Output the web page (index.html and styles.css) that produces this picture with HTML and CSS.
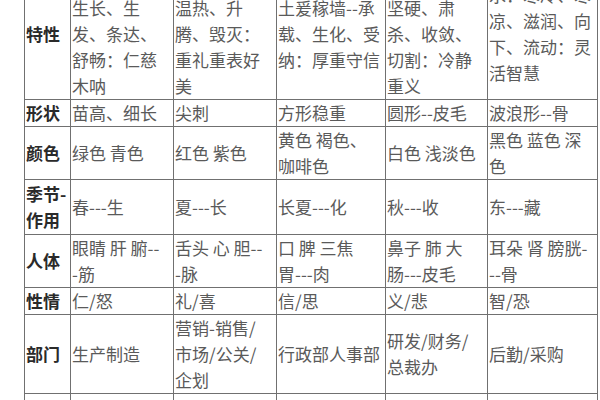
FILE: index.html
```html
<!DOCTYPE html>
<html lang="zh-CN">
<head>
<meta charset="utf-8">
<title>五行</title>
<link rel="stylesheet" href="styles.css">
</head>
<body>
<div class="sheet">
<table class="wx">
<colgroup>
<col class="c0"><col class="c1"><col class="c2"><col class="c3"><col class="c4"><col class="c5">
</colgroup>
<tbody>
<tr class="r-tall">
<th>特性</th>
<td>&nbsp;<br>生长、生<br>发、条达、<br>舒畅：仁慈<br>木呐</td>
<td>&nbsp;<br>温热、升<br>腾、毁灭：<br>重礼重表好<br>美</td>
<td>&nbsp;<br>土爰稼墙--承<br>载、生化、受<br>纳：厚重守信<br>&nbsp;</td>
<td>&nbsp;<br>坚硬、肃<br>杀、收敛、<br>切割：冷静<br>重义</td>
<td>水：寒冷、寒<br>凉、滋润、向<br>下、流动：灵<br>活智慧</td>
</tr>
<tr>
<th>形状</th>
<td>苗高、细长</td>
<td>尖刺</td>
<td>方形稳重</td>
<td>圆形--皮毛</td>
<td>波浪形--骨</td>
</tr>
<tr>
<th>颜色</th>
<td>绿色 青色</td>
<td>红色 紫色</td>
<td>黄色 褐色、<br>咖啡色</td>
<td>白色 浅淡色</td>
<td>黑色 蓝色 深<br>色</td>
</tr>
<tr class="r-season">
<th>季节-<br>作用</th>
<td>春---生</td>
<td>夏---长</td>
<td>长夏---化</td>
<td>秋---收</td>
<td>东---藏</td>
</tr>
<tr>
<th>人体</th>
<td>眼睛 肝 腑--<br>-筋</td>
<td>舌头 心 胆--<br>-脉</td>
<td>口 脾 三焦<br>胃---肉</td>
<td>鼻子 肺 大<br>肠---皮毛</td>
<td>耳朵 肾 膀胱-<br>--骨</td>
</tr>
<tr>
<th>性情</th>
<td>仁/怒</td>
<td>礼/喜</td>
<td>信/思</td>
<td>义/悲</td>
<td>智/恐</td>
</tr>
<tr>
<th>部门</th>
<td>生产制造</td>
<td>营销-销售/<br>市场/公关/<br>企划</td>
<td>行政部人事部</td>
<td>研发/财务/<br>总裁办</td>
<td>后勤/采购</td>
</tr>
<tr>
<th>&nbsp;</th>
<td>&nbsp;</td>
<td>&nbsp;</td>
<td>&nbsp;</td>
<td>&nbsp;</td>
<td>&nbsp;</td>
</tr>
</tbody>
</table>
</div>
</body>
</html>
```
FILE: styles.css
```css
html, body {
  margin: 0;
  padding: 0;
  background: #ffffff;
}

body {
  width: 600px;
  height: 400px;
  overflow: hidden;
  font-family: "Noto Sans CJK SC", "Noto Sans", sans-serif;
}

.sheet {
  padding-left: 24px;
}

.wx {
  margin-top: -32px;
  border-collapse: collapse;
  table-layout: fixed;
  width: 574px;
  font-size: 17px;
  line-height: 26px;
  color: #5a5a5a;
}

.c0 { width: 46px; }
.c1 { width: 103px; }
.c2 { width: 103px; }
.c3 { width: 109px; }
.c4 { width: 102px; }
.c5 { width: 110px; }

.wx th,
.wx td {
  border: 1px solid #707070;
  padding: 0 0 0 1px;
  vertical-align: middle;
  text-align: left;
  white-space: nowrap;
  overflow: hidden;
}

.wx th {
  font-weight: bold;
  color: #2a2a2a;
}

.r-season th,
.r-season td {
  height: 54px;
}
```
